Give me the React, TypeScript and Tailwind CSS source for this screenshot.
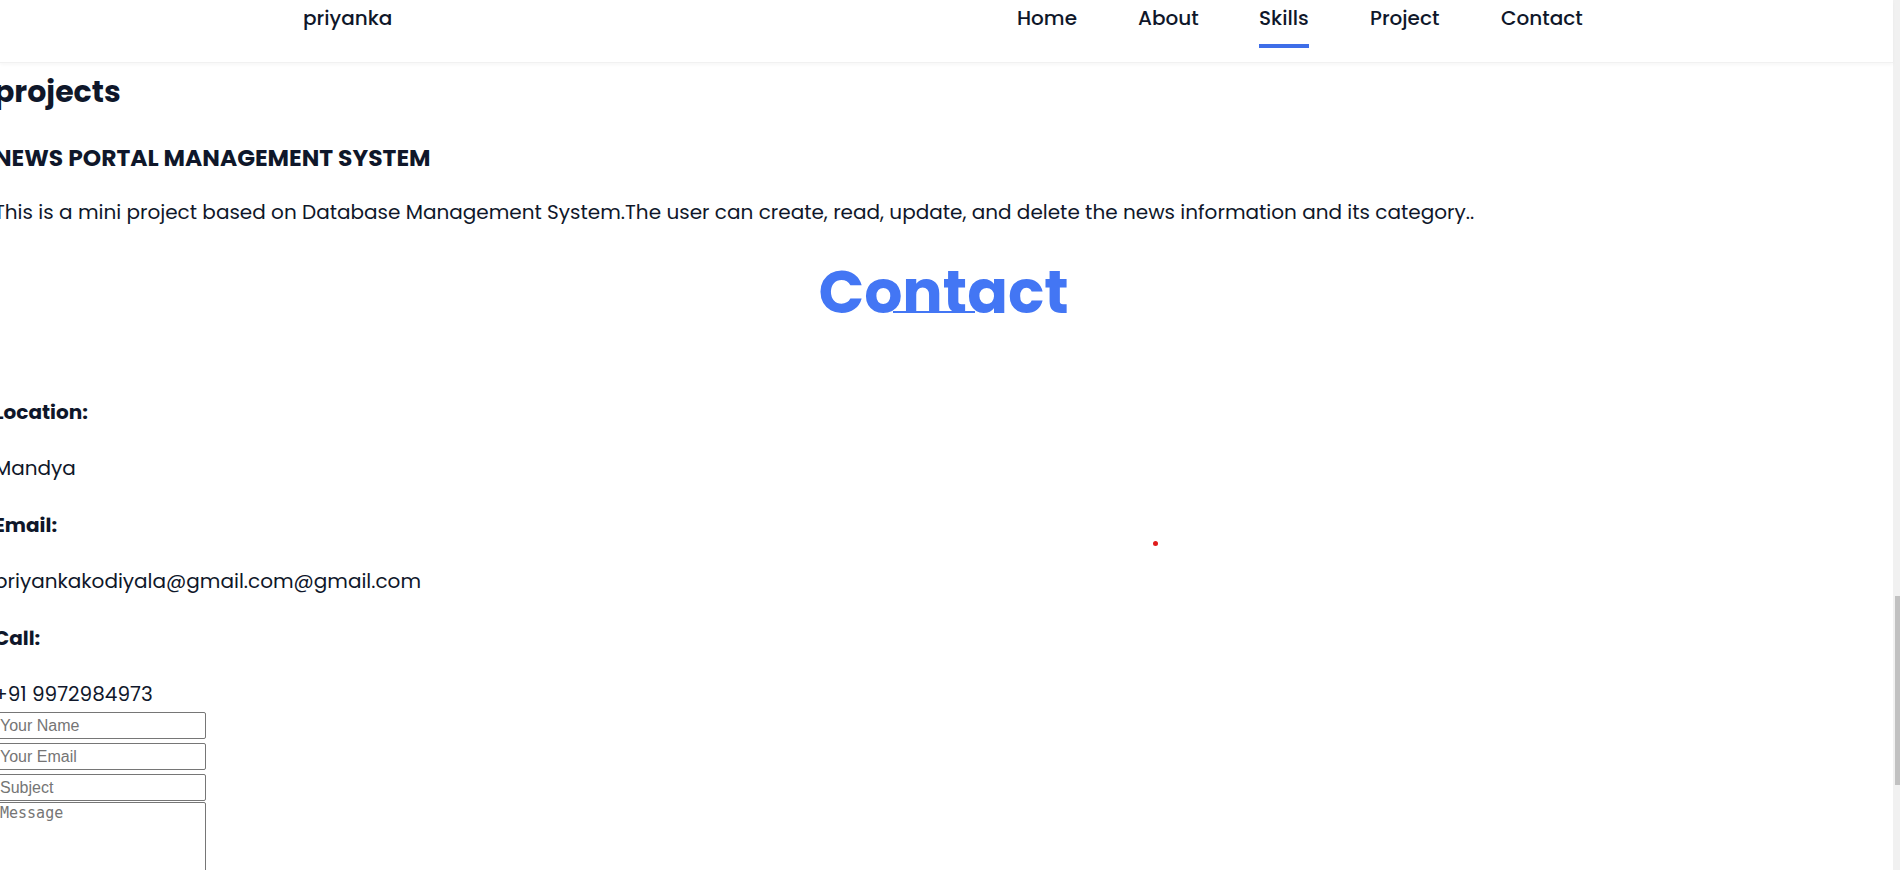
import React from 'react';

const navLinks = [
    { label: 'Home', width: 'w-[121px]' },
    { label: 'About', width: 'w-[121px]' },
    { label: 'Skills', width: 'w-[111px]', active: true },
    { label: 'Project', width: 'w-[131px]' },
    { label: 'Contact', width: 'w-[83px]' },
];

const contactInfo = [
    { title: 'Location:', value: 'Mandya' },
    { title: 'Email:', value: 'priyankakodiyala@gmail.com@gmail.com' },
    { title: 'Call:', value: '+91 9972984973' },
];

export default function App() {
    return (
        <div className="flex h-[870px] w-[1900px] overflow-hidden bg-white font-['Poppins','Open_Sans',sans-serif] text-[#0f172a]">
            <div className="relative flex-1 flex flex-col">
                {/* Header */}
                <header className="h-[63px] shrink-0 bg-white border-b border-[#f1f1f1] shadow-[0_2px_3px_rgba(0,0,0,0.03)]">
                    <div className="flex items-start justify-between pl-[303px] pr-[309px] pt-[3px]">
                        <span className="text-[20px] leading-[30px] font-medium">priyanka</span>
                        <nav className="flex">
                            {navLinks.map((link) => (
                                <div key={link.label} className={`${link.width} flex`}>
                                    <a href="#" className="flex flex-col items-stretch text-[20px] leading-[30px] font-medium">
                                        {link.label}
                                        <span className={`mt-[11px] h-[4px] ${link.active ? 'bg-[#3e6ee8]' : 'bg-transparent'}`} />
                                    </a>
                                </div>
                            ))}
                        </nav>
                    </div>
                </header>

                {/* Projects */}
                <section className="-ml-[6px] pt-[8.5px]">
                    <h2 className="text-[30px] leading-[40px] font-bold">projects</h2>
                    <h3 className="mt-[31px] text-[23.4px] leading-[30px] font-bold">NEWS PORTAL MANAGEMENT SYSTEM</h3>
                    <p className="mt-[25px] text-[20px] leading-[28px]">
                        This is a mini project based on Database Management System.The user can create, read, update, and delete the news information and its category..
                    </p>
                </section>

                {/* Contact */}
                <div className="mt-[29.5px] flex justify-center pr-[6px]">
                    <h2 className="relative text-[60px] leading-[75px] font-bold text-[#4376f4]">
                        Contact
                        <span className="absolute left-[75px] top-[56px] w-[82px] h-[2px] bg-[#4376f4]" />
                    </h2>
                </div>

                <section className="-ml-[6px] mt-[66.5px] flex flex-col">
                    <div className="flex flex-col gap-[26.6px] text-[20px] leading-[30px]">
                        {contactInfo.map((item) => (
                            <React.Fragment key={item.title}>
                                <h4 className="font-bold">{item.title}</h4>
                                <p>{item.value}</p>
                            </React.Fragment>
                        ))}
                    </div>

                    <form className="mt-[3px] flex flex-col items-start font-['Liberation_Sans',Arial,sans-serif]">
                        <input
                            type="text"
                            placeholder="Your Name"
                            className="ml-[3px] w-[209px] h-[27px] px-[2px] text-[16px] border border-[#767676] rounded-[2px] placeholder:text-[#757575]"
                        />
                        <input
                            type="email"
                            placeholder="Your Email"
                            className="ml-[3px] mt-[4px] w-[209px] h-[27px] px-[2px] text-[16px] border border-[#767676] rounded-[2px] placeholder:text-[#757575]"
                        />
                        <input
                            type="text"
                            placeholder="Subject"
                            className="ml-[3px] mt-[4px] w-[209px] h-[27px] px-[2px] text-[16px] border border-[#767676] rounded-[2px] placeholder:text-[#757575]"
                        />
                        <textarea
                            placeholder="Message"
                            className="ml-[3px] mt-[1px] w-[209px] h-[110px] px-[2px] py-[1px] text-[15px] leading-[19px] font-['DejaVu_Sans_Mono',monospace] border border-[#767676] rounded-[2px] resize-none placeholder:text-[#757575]"
                        />
                    </form>
                </section>

                {/* stray red dot */}
                <span className="absolute left-[1153px] top-[541px] w-[5px] h-[5px] rounded-full bg-[#e01b1b]" />
            </div>

            {/* Scrollbar */}
            <div className="w-[7px] shrink-0 bg-[#f1f1f1] flex justify-end">
                <div className="mt-[596px] w-[5px] h-[189px] bg-[#c1c1c1]" />
            </div>
        </div>
    );
}
